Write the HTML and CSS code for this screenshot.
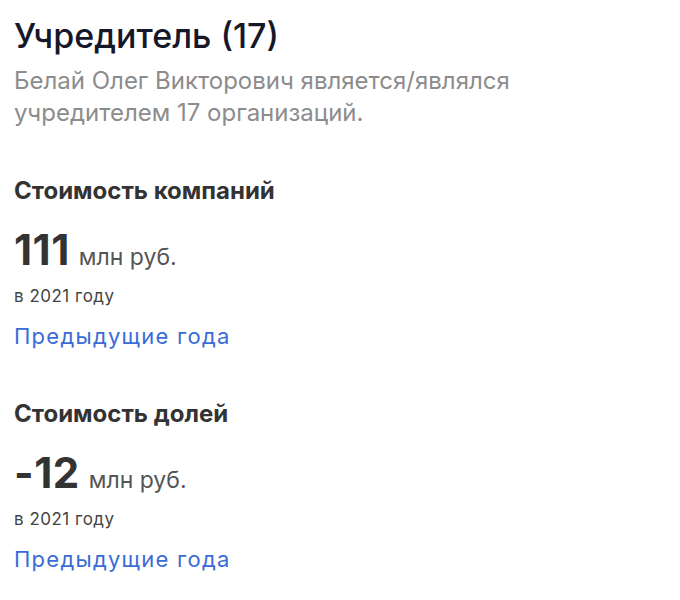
FILE: index.html
```html
<!DOCTYPE html>
<html lang="ru">

<head>
  <meta charset="UTF-8">
  <meta name="viewport" content="width=device-width, initial-scale=1.0">
  <title>Учредитель</title>
  <link rel="stylesheet" href="styles.css">
</head>

<body>
  <div class="container">
    <section class="intro">
      <h1>Учредитель (17)</h1>
      <p>Белай Олег Викторович является/являлся учредителем 17 организаций.</p>
    </section>

    <section class="stat">
      <h3>Стоимость компаний</h3>
      <div class="value"><span class="num">111</span> <span class="unit">млн руб.</span></div>
      <div class="year">в 2021 году</div>
      <a href="#" class="link">Предыдущие года</a>
    </section>

    <section class="stat">
      <h3>Стоимость долей</h3>
      <div class="value"><span class="num">-12</span> <span class="unit">млн руб.</span></div>
      <div class="year">в 2021 году</div>
      <a href="#" class="link">Предыдущие года</a>
    </section>
  </div>
</body>

</html>
```

FILE: styles.css
```css
body {
  font-family: Inter, 'Noto Sans', sans-serif;
  margin: 0;
  padding: 0;
  background-color: #ffffff;
  color: #333;
}

.container {
  padding: 14px 14px;
  max-width: 540px;
}

.intro h1 {
  margin: 0;
  font-size: 34px;
  font-weight: 500;
  color: #17172a;
  line-height: 44px;
}

.intro p {
  margin: 7px 0 0 0;
  font-size: 24px;
  line-height: 32px;
  color: #8c8c8c;
}

.stat {
  margin-top: 47px;
}

.stat h3 {
  margin: 0;
  font-size: 24px;
  line-height: 30px;
  font-weight: 700;
  color: #333;
}

.value {
  margin-top: 18px;
  display: flex;
  align-items: baseline;
  gap: 9px;
  line-height: 52px;
}

.num {
  font-size: 42px;
  font-weight: 700;
  color: #333;
  letter-spacing: 0.5px;
}

.unit {
  font-size: 23px;
  color: #555;
}

.year {
  font-size: 17px;
  line-height: 26px;
  letter-spacing: 0.5px;
  color: #444;
}

.link {
  display: block;
  width: fit-content;
  margin-top: 11px;
  font-size: 22px;
  line-height: 32px;
  letter-spacing: 1.25px;
  color: #3a6bd6;
  text-decoration: none;
}
```
